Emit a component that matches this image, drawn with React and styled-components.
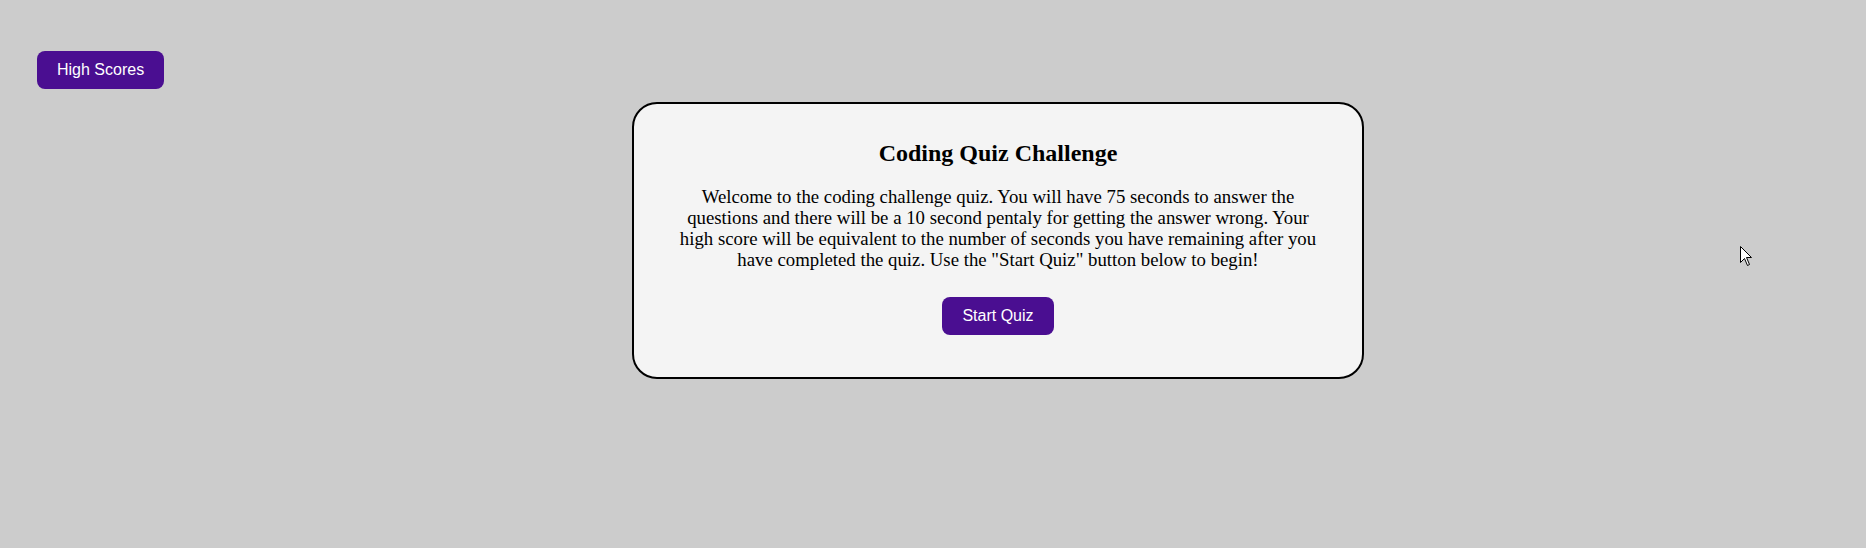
import React from "react"
import styled, {createGlobalStyle} from "styled-components"

const GlobalStyle = createGlobalStyle`
  html, body {
    margin: 0;
    padding: 0;
    background: #cccccc;
  }
  body {
    min-height: 548px;
    font-family: "Liberation Serif", serif;
  }
`

const Page = styled.div`
  position: relative;
  min-height: 548px;
`

const Header = styled.header`
  display: flex;
  padding: 51px 0 0 37px;
`

const PurpleButton = styled.button`
  font-family: "Liberation Sans", Arial, sans-serif;
  font-size: 16px;
  line-height: 18px;
  color: #ffffff;
  background: #4a0e91;
  border: none;
  border-radius: 8px;
  padding: 10px 20px;
  cursor: pointer;
`

const Main = styled.main`
  display: flex;
  justify-content: center;
  padding-left: 130px;
  margin-top: 13px;
`

const Card = styled.section`
  width: 732px;
  box-sizing: border-box;
  background: #f4f4f4;
  border: 2px solid #000;
  border-radius: 25px;
  padding: 35px 39px 42px;
  display: flex;
  flex-direction: column;
  align-items: center;
  text-align: center;
`

const Title = styled.h2`
  margin: 0 0 19px;
  font-size: 24px;
  line-height: 28px;
  font-weight: bold;
  color: #000;
`

const Intro = styled.p`
  margin: 0 0 27px;
  font-size: 18.8px;
  line-height: 21px;
  color: #000;
`

const Pointer = styled.svg`
  position: absolute;
  left: 1740px;
  top: 246px;
`

export default function App(){
  return(
    <Page>
      <GlobalStyle />
      <Header>
        <PurpleButton>High Scores</PurpleButton>
      </Header>
      <Main>
        <Card>
          <Title>Coding Quiz Challenge</Title>
          <Intro>
            Welcome to the coding challenge quiz. You will have 75 seconds to answer the
            questions and there will be a 10 second pentaly for getting the answer wrong. Your
            high score will be equivalent to the number of seconds you have remaining after you
            have completed the quiz. Use the "Start Quiz" button below to begin!
          </Intro>
          <PurpleButton>Start Quiz</PurpleButton>
        </Card>
      </Main>
      {/* mouse pointer left in the shot */}
      <Pointer width="13" height="21" viewBox="0 0 13 21">
        <path d="M0.5 0.5 L0.5 16.5 L4.5 12.5 L7.5 19.5 L9.5 18.5 L6.5 11.5 L11.5 11.5 Z" fill="#fff" stroke="#000" strokeWidth="1" />
      </Pointer>
    </Page>
  )
}
